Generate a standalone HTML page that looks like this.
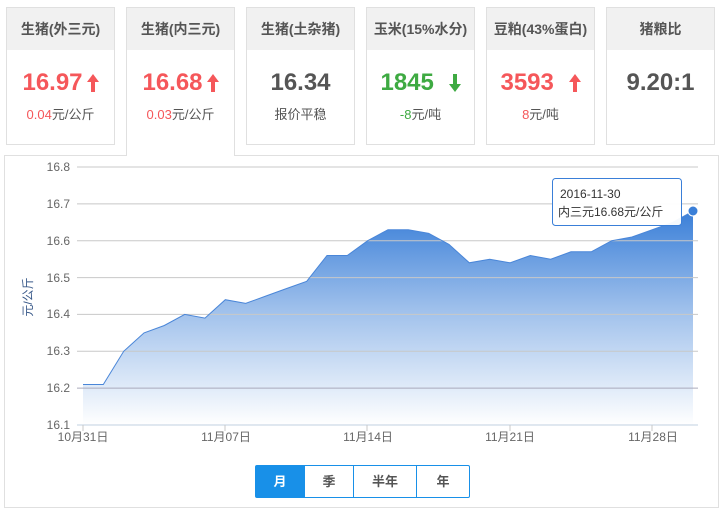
<!DOCTYPE html>
<html><head><meta charset="utf-8"><style>
*{margin:0;padding:0;box-sizing:border-box}
body{width:726px;height:511px;background:#fff;font-family:"Liberation Sans","Noto Sans CJK SC",sans-serif;position:relative;overflow:hidden}
.card{position:absolute;top:7px;width:109px;height:138px;border:1px solid #e0e0e0;background:#fff}
.card .h{height:42px;background:#f1f1f1;text-align:center;line-height:42px;font-size:14px;font-weight:bold;color:#555}
.card.act{height:149px;border-bottom:none;z-index:2}
.v{text-align:center;font-size:24px;font-weight:bold;margin-top:18px;color:#555;height:30px;line-height:30px}
.v svg{vertical-align:-2px;margin-left:4px}
.s{text-align:center;font-size:13px;color:#555;margin-top:6px}
.r{color:#f5575a}.g{color:#3eaa42}
.panel{position:absolute;left:4px;top:155px;width:715px;height:353px;border:1px solid #e0e0e0}
.btns{position:absolute;top:465px;left:255px;height:33px;display:flex;border:1px solid #1890e8;border-radius:2px;z-index:3}
.btns div{height:31px;line-height:31px;text-align:center;font-size:13px;font-weight:bold;color:#555;border-left:1px solid #1890e8}
.btns div:first-child{border-left:none;background:#1890e8;color:#fff}
</style></head><body>
<div class="card" style="left:6px"><div class="h">生猪(外三元)</div><div class="v r">16.97<svg width="12" height="18" viewBox="0 0 12 18"><path d="M6 0 L12 8 L8 8 L8 18 L4 18 L4 8 L0 8 Z" fill="#f5575a"/></svg></div><div class="s"><span class="r">0.04</span>元/公斤</div></div>
<div class="card act" style="left:126px"><div class="h">生猪(内三元)</div><div class="v r">16.68<svg width="12" height="18" viewBox="0 0 12 18"><path d="M6 0 L12 8 L8 8 L8 18 L4 18 L4 8 L0 8 Z" fill="#f5575a"/></svg></div><div class="s"><span class="r">0.03</span>元/公斤</div></div>
<div class="card" style="left:246px"><div class="h">生猪(土杂猪)</div><div class="v">16.34</div><div class="s">报价平稳</div></div>
<div class="card" style="left:366px"><div class="h">玉米(15%水分)</div><div class="v g">1845 <svg width="12" height="18" viewBox="0 0 12 18" style="margin-left:8px"><path d="M6 18 L12 10 L8 10 L8 0 L4 0 L4 10 L0 10 Z" fill="#3eaa42"/></svg></div><div class="s"><span class="g">-8</span>元/吨</div></div>
<div class="card" style="left:486px"><div class="h">豆粕(43%蛋白)</div><div class="v r">3593 <svg width="12" height="18" viewBox="0 0 12 18" style="margin-left:8px"><path d="M6 0 L12 8 L8 8 L8 18 L4 18 L4 8 L0 8 Z" fill="#f5575a"/></svg></div><div class="s"><span class="r">8</span>元/吨</div></div>
<div class="card" style="left:606px"><div class="h">猪粮比</div><div class="v">9.20:1</div></div>
<div class="panel"></div>
<svg style="position:absolute;left:0;top:0" width="726" height="511">
<defs><linearGradient id="gr" x1="0" y1="0" x2="0" y2="1"><stop offset="0" stop-color="#3a7fd8"/><stop offset="0.45" stop-color="#9dbfeb"/><stop offset="1" stop-color="#ffffff"/></linearGradient></defs>
<path d="M83,425 L83,384.5 103.3,384.5 123.7,351.3 144,332.9 164.3,325.5 184.7,314.4 205,318.1 225.3,299.7 245.7,303.4 266,296 286.3,288.6 306.7,281.3 327,255.5 347.3,255.5 367.7,240.7 388,229.7 408.3,229.7 428.7,233.3 449,244.4 469.3,262.8 489.7,259.2 510,262.8 530.3,255.5 550.7,259.2 571,251.8 591.3,251.8 611.7,240.7 632,237 652.3,229.7 672.7,222.3 693,211.2 L693,425 Z" fill="url(#gr)"/>
<g stroke="#c8c8c8" stroke-width="1">
<line x1="77" x2="698" y1="167" y2="167"/><line x1="77" x2="698" y1="203.9" y2="203.9"/><line x1="77" x2="698" y1="240.7" y2="240.7"/><line x1="77" x2="698" y1="277.6" y2="277.6"/><line x1="77" x2="698" y1="314.4" y2="314.4"/><line x1="77" x2="698" y1="351.3" y2="351.3"/><line x1="77" x2="698" y1="388.1" y2="388.1" stroke="#aab"/><line x1="77" x2="698" y1="425" y2="425" stroke="#c0d0e0"/>
<line x1="83" x2="83" y1="425" y2="431"/><line x1="225" x2="225" y1="425" y2="431"/><line x1="367" x2="367" y1="425" y2="431"/><line x1="510" x2="510" y1="425" y2="431"/><line x1="652" x2="652" y1="425" y2="431"/>
</g>
<polyline fill="none" stroke="#4a86d8" stroke-width="1" points="83,384.5 103.3,384.5 123.7,351.3 144,332.9 164.3,325.5 184.7,314.4 205,318.1 225.3,299.7 245.7,303.4 266,296 286.3,288.6 306.7,281.3 327,255.5 347.3,255.5 367.7,240.7 388,229.7 408.3,229.7 428.7,233.3 449,244.4 469.3,262.8 489.7,259.2 510,262.8 530.3,255.5 550.7,259.2 571,251.8 591.3,251.8 611.7,240.7 632,237 652.3,229.7 672.7,222.3 693,211.2"/>
<circle cx="693" cy="211" r="5" fill="#3a7fd8" stroke="#fff" stroke-width="1"/>
<g font-family="Liberation Sans,Noto Sans CJK SC,sans-serif" font-size="12" fill="#666" text-anchor="end">
<text x="70" y="171">16.8</text><text x="70" y="208">16.7</text><text x="70" y="245">16.6</text><text x="70" y="282">16.5</text><text x="70" y="318">16.4</text><text x="70" y="355">16.3</text><text x="70" y="392">16.2</text><text x="70" y="429">16.1</text>
</g>
<g font-family="Liberation Sans,Noto Sans CJK SC,sans-serif" font-size="12" fill="#666" text-anchor="middle">
<text x="83" y="441">10月31日</text><text x="226" y="441">11月07日</text><text x="368" y="441">11月14日</text><text x="510" y="441">11月21日</text><text x="653" y="441">11月28日</text>
</g>
<text transform="translate(32,297) rotate(-90)" text-anchor="middle" font-family="Liberation Sans,Noto Sans CJK SC,sans-serif" font-size="12" fill="#3a5a8a">元/公斤</text>
<rect x="552.5" y="178.5" width="129" height="47" rx="3" fill="#fff" fill-opacity="0.95" stroke="#3a7fd8"/>
<g font-family="Liberation Sans,Noto Sans CJK SC,sans-serif" font-size="12" fill="#333"><text x="560" y="198">2016-11-30</text><text x="558" y="216">内三元16.68元/公斤</text></g>
</svg>
<div class="btns"><div style="width:48px">月</div><div style="width:49px">季</div><div style="width:63px">半年</div><div style="width:53px">年</div></div>
</body></html>
